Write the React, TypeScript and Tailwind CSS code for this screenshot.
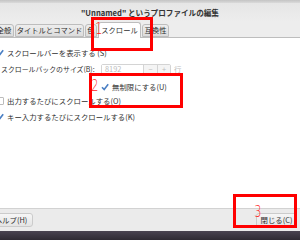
import React from 'react';

const Check = ({ checked }: { checked: boolean }) => (
  <span className="w-[8px] h-[8px] shrink-0 flex items-center justify-center">
    {checked ? (
      <svg width="8" height="8" viewBox="0 0 8 8">
        <path d="M1 4.2 L3.2 6.5 L7.2 1.2" stroke="#4a7fc4" strokeWidth="1.6" fill="none" />
      </svg>
    ) : null}
  </span>
);

const Tab = ({ label, width, active }: { label: string; width: string; active?: boolean }) => (
  <div
    className={`${width} flex items-center justify-center whitespace-nowrap border border-[#bdbdbd] rounded-t-[3px] ${
      active ? 'h-[16px] bg-white border-b-0 -mb-px' : 'h-[13px] bg-gradient-to-b from-[#eeeeee] to-[#dcdcdc]'
    }`}
  >
    {label}
  </div>
);

export default function App() {
  return (
    <div className="w-[300px] h-[240px] overflow-hidden relative flex flex-col bg-[#ededed] text-[#2f2f2f] font-['Noto_Sans_CJK_JP','Noto_Sans',sans-serif] leading-none">
      {/* title bar */}
      <div className="h-[3px] bg-gradient-to-b from-[#c4c4c4] to-[#dadada]" />
      <div className="h-[19px] flex items-center justify-center text-[7.6px] font-bold text-[#333] bg-gradient-to-b from-[#e6e6e6] to-[#ededed]">
        "Unnamed" というプロファイルの編集
      </div>

      {/* tabs */}
      <div className="h-[16px] flex items-end gap-px border-b border-[#bdbdbd] ml-[-6px] text-[7.3px]">
        <Tab label="全般" width="w-[20px]" />
        <Tab label="タイトルとコマンド" width="w-[69px]" />
        <Tab label="色" width="w-[12px]" />
        <Tab label="スクロール" width="w-[43px]" active />
        <Tab label="互換性" width="w-[27px]" />
      </div>

      {/* content */}
      <div className="flex-1 bg-white flex flex-col pt-[9px] text-[7.4px] whitespace-nowrap">
        <div className="h-[12px] flex items-center gap-[3px] ml-[-4px]">
          <Check checked />
          <span>スクロールバーを表示する (S)</span>
        </div>
        <div className="h-[12px] mt-[4px] flex items-center ml-[1px]">
          <span className="w-[100px] text-[6.9px]">スクロールバックのサイズ(B):</span>
          <div className="h-[11px] flex border border-[#d4d4d4] rounded-[2px] text-[#bcbcbc]">
            <span className="w-[41px] flex items-center pl-[3px] bg-white">8192</span>
            <span className="w-[14px] flex items-center justify-center border-l border-[#d4d4d4] bg-[#f4f4f4]">−</span>
            <span className="w-[13px] flex items-center justify-center border-l border-[#d4d4d4] bg-[#f4f4f4]">+</span>
          </div>
          <span className="ml-[3px] text-[#bcbcbc]">行</span>
        </div>
        <div className="h-[12px] mt-[6px] flex items-center gap-[3px] pl-[101px]">
          <Check checked />
          <span>無制限にする(U)</span>
        </div>
        <div className="h-[12px] mt-[2px] flex items-center gap-[3px] ml-[-4px]">
          <span className="w-[8px] h-[8px] shrink-0 border border-[#bcbcbc] rounded-[1px]" />
          <span>出力するたびにスクロールする(O)</span>
        </div>
        <div className="h-[12px] mt-[4px] flex items-center gap-[3px] ml-[-4px]">
          <Check checked />
          <span>キー入力するたびにスクロールする(K)</span>
        </div>
      </div>

      {/* footer */}
      <div className="h-[23px] border-t border-[#d2d2d2] bg-[#ebebeb] flex items-center justify-between text-[7.4px] whitespace-nowrap">
        <div className="ml-[-11px] w-[44px] h-[14px] flex items-center justify-center border border-[#cbcbcb] rounded-[3px] bg-gradient-to-b from-[#f6f6f6] to-[#e4e4e4]">
          ヘルプ(H)
        </div>
        <div className="mr-[3px] w-[41px] h-[15px] flex items-center justify-center border border-[#cbcbcb] rounded-[3px] bg-gradient-to-b from-[#f6f6f6] to-[#e4e4e4]">
          閉じる(C)
        </div>
      </div>
      <div className="h-[9px] bg-gradient-to-b from-[#4a4451] to-[#2f2b34]" />

      {/* annotations */}
      <div className="absolute left-[91px] top-[17px] w-[62px] h-[34px] border-[3px] border-[#ff0000]" />
      <span className="absolute left-[94px] top-[22px] text-[15px] text-[#ff1a1a] font-['DejaVu_Sans',sans-serif] font-light scale-x-75">1</span>
      <div className="absolute left-[89px] top-[73px] w-[94px] h-[35px] border-[3px] border-[#ff0000]" />
      <span className="absolute left-[90px] top-[79px] text-[15px] text-[#ff1a1a] font-['DejaVu_Sans',sans-serif] font-light scale-x-75">2</span>
      <div className="absolute left-[233px] top-[194px] w-[64px] h-[34px] border-[3px] border-[#ff0000]" />
      <span className="absolute left-[253px] top-[205px] text-[15px] text-[#ff1a1a] font-['DejaVu_Sans',sans-serif] font-light scale-x-75">3</span>
    </div>
  );
}
